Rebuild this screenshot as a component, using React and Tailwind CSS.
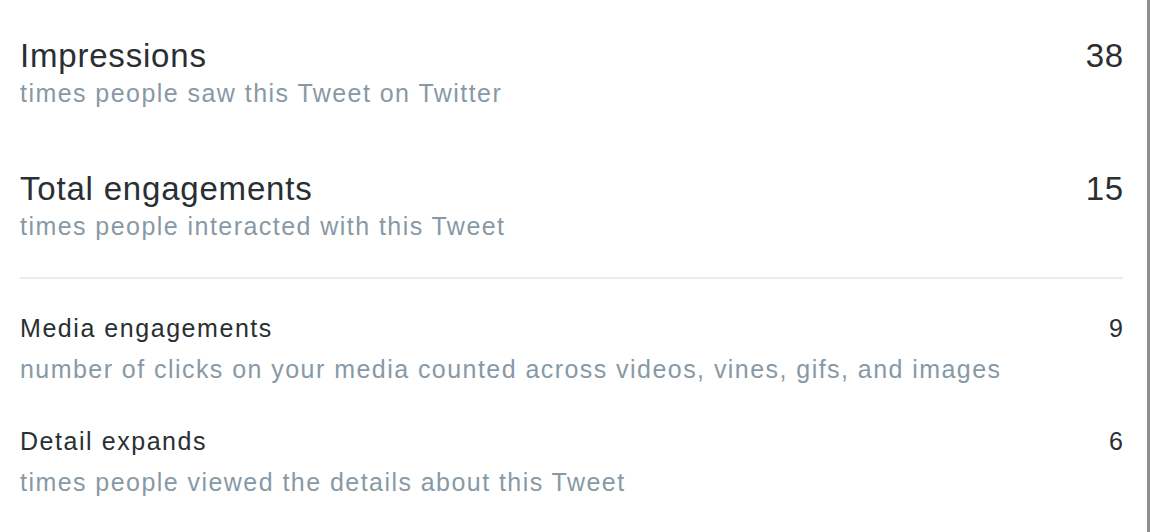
import React from "react";

const font = { fontFamily: '"Helvetica Neue", Helvetica, "Liberation Sans", Arial, sans-serif' };

function BigRow({ title, sub, value, className = "" }) {
  return (
    <div className={"flex justify-between " + className}>
      <div className="flex flex-col">
        <div className="text-[33px] leading-[36px] tracking-[0.8px] font-light text-[#292f33]">{title}</div>
        <div className="mt-[5px] text-[25px] leading-[28px] tracking-[1.45px] text-[#8899a6]">{sub}</div>
      </div>
      <div className="text-[33px] leading-[36px] tracking-[0.8px] mr-[-1px] font-light text-[#292f33]">{value}</div>
    </div>
  );
}

function SmallRow({ title, sub, value, className = "" }) {
  return (
    <div className={"flex justify-between " + className}>
      <div className="flex flex-col">
        <div className="text-[25px] leading-[30px] tracking-[1.55px] text-[#292f33]">{title}</div>
        <div className="mt-[12px] text-[25px] leading-[28px] tracking-[1.45px] text-[#8899a6]">{sub}</div>
      </div>
      <div className="text-[25px] leading-[30px] text-[#292f33]">{value}</div>
    </div>
  );
}

export default function App() {
  return (
    <div className="w-[1150px] h-[532px] bg-white flex overflow-hidden" style={font}>
      <div className="flex-1 pl-5 pr-[24px] pt-[38px] border-r-[3px] border-[#8e8e8e]">
        <BigRow title="Impressions" sub="times people saw this Tweet on Twitter" value="38" />
        <BigRow className="mt-[64px]" title="Total engagements" sub="times people interacted with this Tweet" value="15" />
        <div className="mt-[37px] h-[2px] bg-[#e6ecf0]" />
        <SmallRow
          className="mt-[34px]"
          title="Media engagements"
          sub="number of clicks on your media counted across videos, vines, gifs, and images"
          value="9"
        />
        <SmallRow
          className="mt-[43px]"
          title="Detail expands"
          sub="times people viewed the details about this Tweet"
          value="6"
        />
      </div>
    </div>
  );
}
